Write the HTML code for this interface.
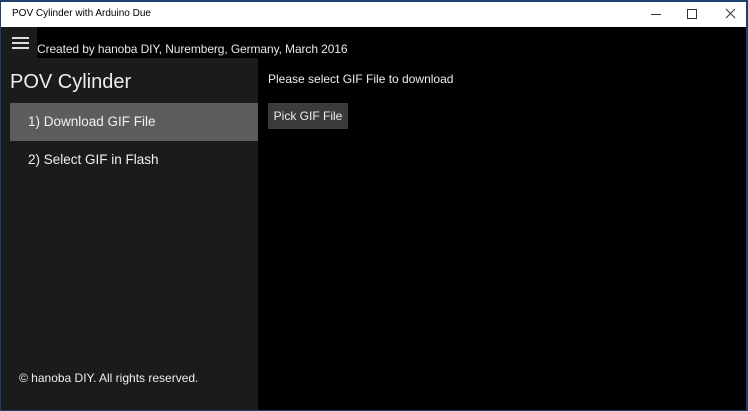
<!DOCTYPE html>
<html><head><meta charset="utf-8"><style>
*{margin:0;padding:0;box-sizing:border-box}
body{width:748px;height:411px;overflow:hidden;background:#000;font-family:"Liberation Sans",sans-serif;color:#fff;position:relative}
.frame{position:absolute;inset:0;border:1px solid #1d3f6e;border-top:2px solid #1d3f6e;border-right:2px solid #1d3f6e;pointer-events:none;z-index:9}
.title{position:absolute;left:0;top:0;width:748px;height:27px;background:#fff;color:#000;font-size:10px;line-height:27px;padding-left:12px}
.ctl{position:absolute;top:0;height:27px}
.ham{position:absolute;left:1px;top:27px;width:36px;height:31px;background:#1b1b1b}
.ham i{position:absolute;left:11px;width:17px;height:1.5px;background:#ddd}
.hdr{position:absolute;left:37px;top:42px;font-size:12px;color:#e8e8e8;letter-spacing:-0.1px}
.pane{position:absolute;left:1px;top:58px;width:257px;height:353px;background:#1b1b1b}
.pt{position:absolute;left:10px;top:71px;font-size:20px;color:#eee}
.sel{position:absolute;left:10px;top:103px;width:248px;height:38px;background:#5d5d5d}
.it{position:absolute;left:28px;font-size:13.5px;color:#f0f0f0}
.copy{position:absolute;left:19px;top:371px;font-size:12px;color:#eee}
.msg{position:absolute;left:268px;top:72px;font-size:12px;color:#eee}
.btn{position:absolute;left:268px;top:103px;width:80px;height:26px;background:#3b3b3b;font-size:12px;line-height:26px;text-align:center;color:#eee}
</style></head><body>
<div class="title">POV Cylinder with Arduino Due</div>
<svg class="ctl" style="left:640px" width="108" height="27">
<line x1="11" y1="14.5" x2="21" y2="14.5" stroke="#333" stroke-width="1"/>
<rect x="47.5" y="9.5" width="9" height="9" fill="none" stroke="#333"/>
<path d="M86 9L95 18M95 9L86 18" stroke="#333" stroke-width="1"/>
</svg>
<div class="ham"><i style="top:10px"></i><i style="top:15px"></i><i style="top:20px"></i></div>
<div class="hdr">Created by hanoba DIY, Nuremberg, Germany, March 2016</div>
<div class="pane"></div>
<div class="pt">POV Cylinder</div>
<div class="sel"></div>
<div class="it" style="top:114px">1) Download GIF File</div>
<div class="it" style="top:152px">2) Select GIF in Flash</div>
<div class="copy">© hanoba DIY. All rights reserved.</div>
<div class="msg">Please select GIF File to download</div>
<div class="btn">Pick GIF File</div>
<div class="frame"></div>
</body></html>
